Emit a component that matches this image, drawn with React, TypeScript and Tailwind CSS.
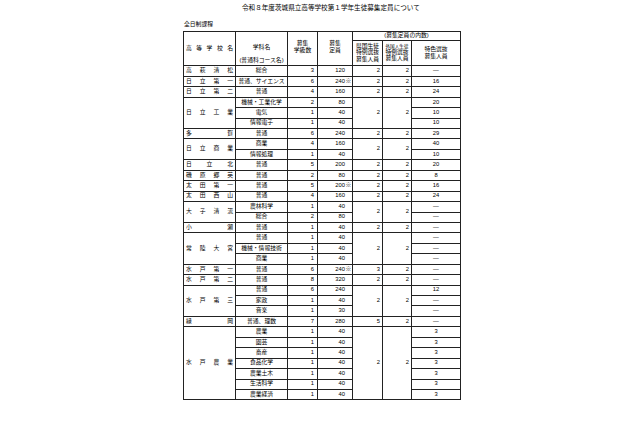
import React from "react";

type Sub = { dept: string; cls: string; cap: string; mark?: boolean; tok: string };
type School = { name: string; ken: string; gai: string; subs: Sub[] };

const schools: School[] = [
  { name: "高萩清松", ken: "2", gai: "2", subs: [{ dept: "総合", cls: "3", cap: "120", tok: "―" }] },
  { name: "日立第一", ken: "2", gai: "2", subs: [{ dept: "普通、サイエンス", cls: "6", cap: "240", mark: true, tok: "16" }] },
  { name: "日立第二", ken: "2", gai: "2", subs: [{ dept: "普通", cls: "4", cap: "160", tok: "24" }] },
  {
    name: "日立工業",
    ken: "2",
    gai: "2",
    subs: [
      { dept: "機械・工業化学", cls: "2", cap: "80", tok: "20" },
      { dept: "電気", cls: "1", cap: "40", tok: "10" },
      { dept: "情報電子", cls: "1", cap: "40", tok: "10" },
    ],
  },
  { name: "多賀", ken: "2", gai: "2", subs: [{ dept: "普通", cls: "6", cap: "240", tok: "29" }] },
  {
    name: "日立商業",
    ken: "2",
    gai: "2",
    subs: [
      { dept: "商業", cls: "4", cap: "160", tok: "40" },
      { dept: "情報処理", cls: "1", cap: "40", tok: "10" },
    ],
  },
  { name: "日立北", ken: "2", gai: "2", subs: [{ dept: "普通", cls: "5", cap: "200", tok: "20" }] },
  { name: "磯原郷英", ken: "2", gai: "2", subs: [{ dept: "普通", cls: "2", cap: "80", tok: "8" }] },
  { name: "太田第一", ken: "2", gai: "2", subs: [{ dept: "普通", cls: "5", cap: "200", mark: true, tok: "16" }] },
  { name: "太田西山", ken: "2", gai: "2", subs: [{ dept: "普通", cls: "4", cap: "160", tok: "24" }] },
  {
    name: "大子清流",
    ken: "2",
    gai: "2",
    subs: [
      { dept: "農林科学", cls: "1", cap: "40", tok: "―" },
      { dept: "総合", cls: "2", cap: "80", tok: "―" },
    ],
  },
  { name: "小瀬", ken: "2", gai: "2", subs: [{ dept: "普通", cls: "1", cap: "40", tok: "―" }] },
  {
    name: "常陸大宮",
    ken: "2",
    gai: "2",
    subs: [
      { dept: "普通", cls: "1", cap: "40", tok: "―" },
      { dept: "機械・情報技術", cls: "1", cap: "40", tok: "―" },
      { dept: "商業", cls: "1", cap: "40", tok: "―" },
    ],
  },
  { name: "水戸第一", ken: "3", gai: "2", subs: [{ dept: "普通", cls: "6", cap: "240", mark: true, tok: "―" }] },
  { name: "水戸第二", ken: "2", gai: "2", subs: [{ dept: "普通", cls: "8", cap: "320", tok: "―" }] },
  {
    name: "水戸第三",
    ken: "2",
    gai: "2",
    subs: [
      { dept: "普通", cls: "6", cap: "240", tok: "12" },
      { dept: "家政", cls: "1", cap: "40", tok: "―" },
      { dept: "音楽", cls: "1", cap: "30", tok: "―" },
    ],
  },
  { name: "緑岡", ken: "5", gai: "2", subs: [{ dept: "普通、理数", cls: "7", cap: "280", tok: "―" }] },
  {
    name: "水戸農業",
    ken: "2",
    gai: "2",
    subs: [
      { dept: "農業", cls: "1", cap: "40", tok: "3" },
      { dept: "園芸", cls: "1", cap: "40", tok: "3" },
      { dept: "畜産", cls: "1", cap: "40", tok: "3" },
      { dept: "食品化学", cls: "1", cap: "40", tok: "3" },
      { dept: "農業土木", cls: "1", cap: "40", tok: "3" },
      { dept: "生活科学", cls: "1", cap: "40", tok: "3" },
      { dept: "農業経済", cls: "1", cap: "40", tok: "3" },
    ],
  },
];

const cell = "border border-[#222] p-0 leading-none align-middle";

function Spread({ text }: { text: string }) {
  return (
    <div className="flex justify-between px-[2px]">
      {text.split("").map((c, i) => (
        <span key={i}>{c}</span>
      ))}
    </div>
  );
}

export default function App() {
  return (
    <div
      className="w-[640px] h-[426px] bg-white text-black pt-[5px]"
      style={{ fontFamily: '"Liberation Sans", "Noto Sans CJK JP", sans-serif' }}
    >
      <div className="pl-[242px] text-[6.6px] leading-none">令和８年度茨城県立高等学校第１学年生徒募集定員について</div>
      <div className="pl-[184px] pt-[10px] text-[5.8px] leading-none">全日制課程</div>

      <table className="ml-[183px] mt-[4px] w-[277px] table-fixed border-collapse text-[5.8px]">
        <colgroup>
          <col className="w-[52px]" />
          <col className="w-[52px]" />
          <col className="w-[30px]" />
          <col className="w-[35px]" />
          <col className="w-[30px]" />
          <col className="w-[29px]" />
          <col className="w-[49px]" />
        </colgroup>
        <thead>
          <tr className="h-[9px]">
            <td rowSpan={2} className={cell}>
              <Spread text="高等学校名" />
            </td>
            <td rowSpan={2} className={`${cell} text-center align-top`}>
              <div className="flex flex-col items-center pt-[13px] gap-[7px]">
                <span>学科名</span>
                <span>(普通科コース名)</span>
              </div>
            </td>
            <td rowSpan={2} className={`${cell} text-center`}>
              <div className="flex flex-col items-center gap-[1.5px] -mt-[3px]">
                <span>募集</span>
                <span>学級数</span>
              </div>
            </td>
            <td rowSpan={2} className={`${cell} text-center`}>
              <div className="flex flex-col items-center gap-[1.5px] -mt-[3px]">
                <span>募集</span>
                <span>定員</span>
              </div>
            </td>
            <td colSpan={3} className={`${cell} text-center`}>
              (募集定員の内数)
            </td>
          </tr>
          <tr className="h-[25px]">
            <td className={`${cell} text-center`}>
              <div className="flex flex-col items-center gap-[0.8px]">
                <span>県国生徒</span>
                <span>特例選抜</span>
                <span>募集人員</span>
              </div>
            </td>
            <td className={`${cell} text-center`}>
              <div className="flex flex-col items-center gap-[0.8px]">
                <span className="text-[4.6px]">外国人生徒</span>
                <span>特例選抜</span>
                <span>募集人員</span>
              </div>
            </td>
            <td className={`${cell} text-center`}>
              <div className="flex flex-col items-center gap-[1.5px]">
                <span>特色選抜</span>
                <span>募集人員</span>
              </div>
            </td>
          </tr>
        </thead>
        <tbody>
          {schools.map((s) =>
            s.subs.map((d, i) => (
              <tr key={s.name + i} className="h-[10.44px]">
                {i === 0 && (
                  <td rowSpan={s.subs.length} className={cell}>
                    <Spread text={s.name} />
                  </td>
                )}
                <td className={`${cell} text-center whitespace-nowrap`}>{d.dept}</td>
                <td className={`${cell} text-right pr-[3px]`}>{d.cls}</td>
                <td className={cell}>
                  <div className="flex justify-end items-center">
                    <span>{d.cap}</span>
                    <span className="w-[7px] text-center">{d.mark ? "※" : ""}</span>
                  </div>
                </td>
                {i === 0 && (
                  <td rowSpan={s.subs.length} className={`${cell} text-right pr-[2px]`}>
                    {s.ken}
                  </td>
                )}
                {i === 0 && (
                  <td rowSpan={s.subs.length} className={`${cell} text-right pr-[2px]`}>
                    {s.gai}
                  </td>
                )}
                <td className={`${cell} text-center`}>{d.tok}</td>
              </tr>
            ))
          )}
        </tbody>
      </table>
    </div>
  );
}
